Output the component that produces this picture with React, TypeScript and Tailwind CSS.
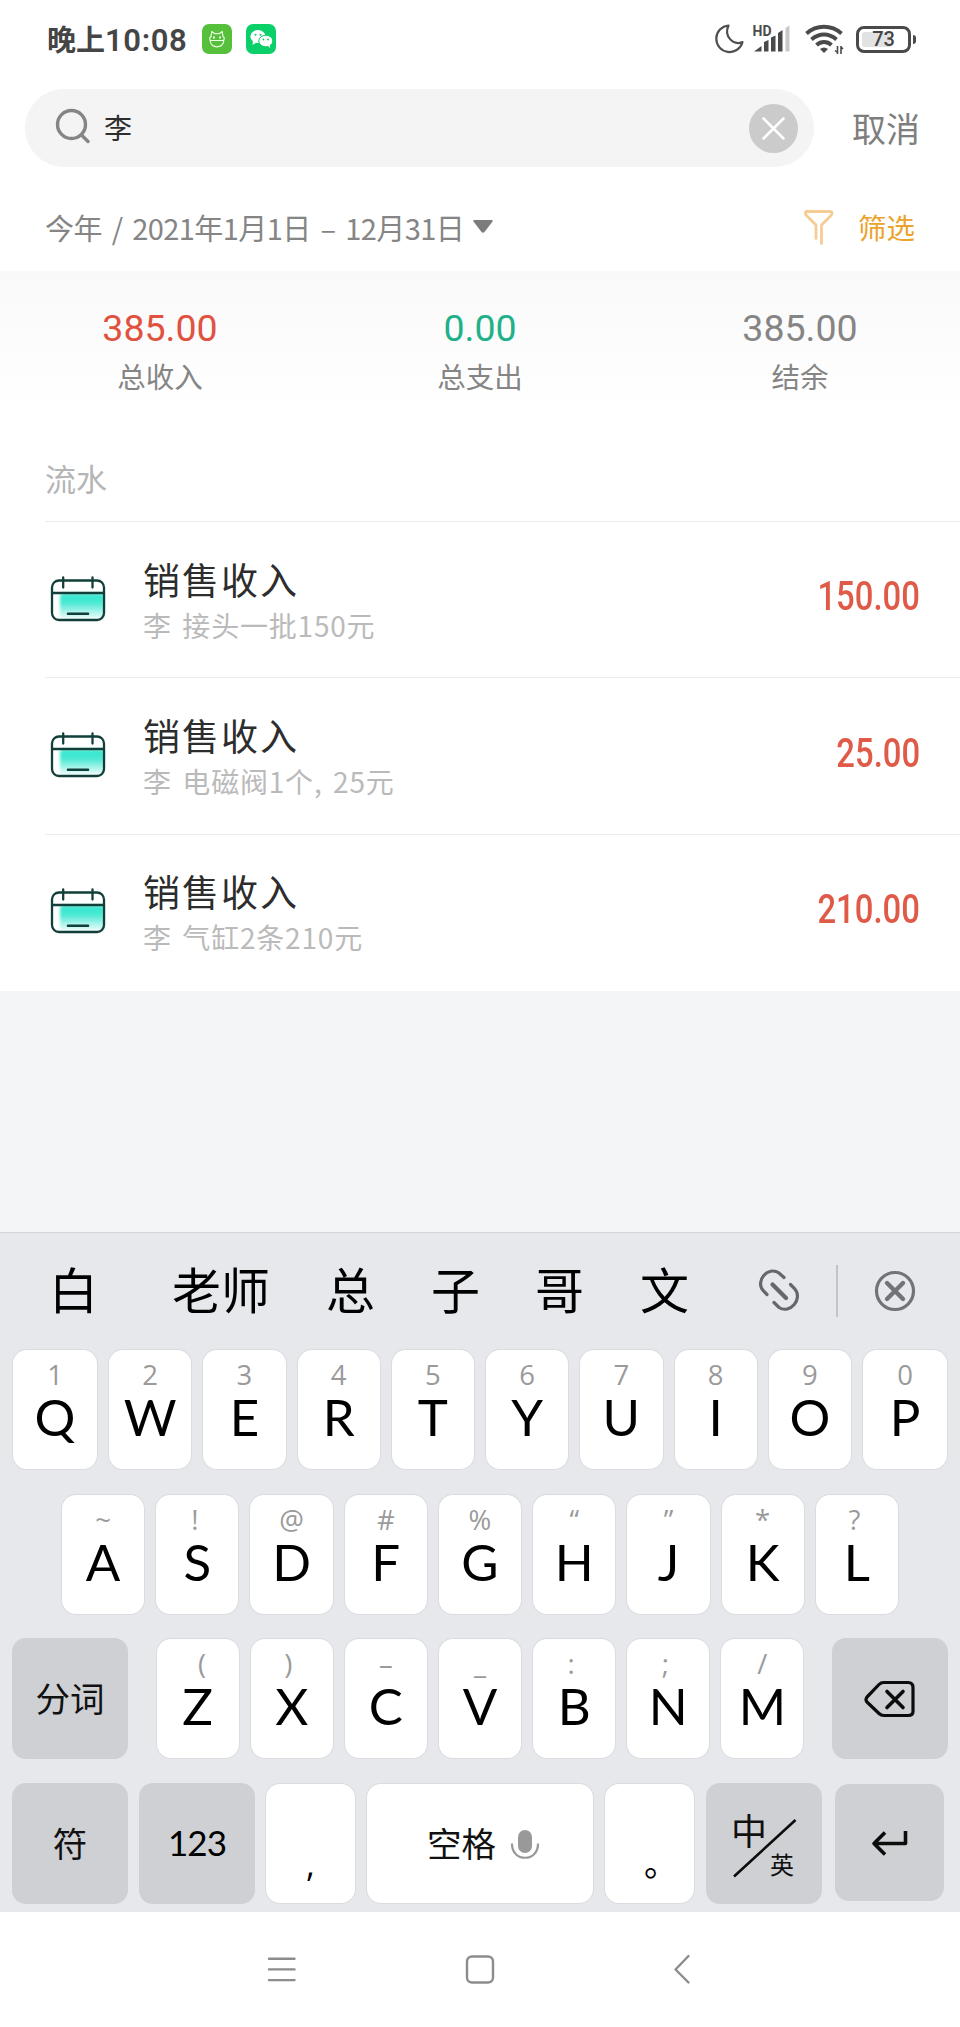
import type { ReactNode } from 'react'

const records = [
  { id: 1, title: '销售收入', note: '李 接头一批150元', amount: '150.00' },
  { id: 2, title: '销售收入', note: '李 电磁阀1个, 25元', amount: '25.00' },
  { id: 3, title: '销售收入', note: '李 气缸2条210元', amount: '210.00' },
]

const summary = [
  { label: '总收入', value: '385.00', color: 'text-[#e0523f]' },
  { label: '总支出', value: '0.00', color: 'text-[#1fb28a]' },
  { label: '结余', value: '385.00', color: 'text-[#858585]' },
]

const topRow = ['1Q', '2W', '3E', '4R', '5T', '6Y', '7U', '8I', '9O', '0P']
const middleRow = ['~A', '!S', '@D', '#F', '%G', '“H', '”J', '*K', '?L']
const bottomRow = ['(Z', ')X', '–C', '_V', ':B', ';N', '/M']

// hints whose glyph sits off the middle of the key
const hintShift: Record<string, string> = {
  '(': 'pl-[9px]',
  ')': 'pr-[7px]',
  '!': 'pr-[5px]',
  '?': 'pr-[5px]',
  ':': 'pr-[6px]',
  ';': 'pr-[6px]',
}

const StatusBar = () => (
  <header className="flex h-[78px] items-center pl-[47px] pr-[44px] text-[#454545]">
    <span className="w-[155px] whitespace-nowrap text-[29px] leading-[40px] font-bold">
      晚上<span className="font-['Roboto'] text-[31px] font-semibold tracking-[0.6px]">10:08</span>
    </span>
    <svg width="30" height="30" viewBox="0 0 30 30" fill="none">
      <rect width="30" height="30" rx="7" fill="#56bf3c" />
      <g stroke="#e9ffe0" strokeWidth="1.2" strokeLinecap="round" strokeLinejoin="round">
        <path d="M9 12.500 9.800 7.500l3 2.200h4.400l3-2.200.8 5c1.700 1 1.700 3.200 0 4.200" />
        <path d="M9 12.500c-1.700 1-1.700 3.200 0 4.200M8.200 16.500h13.600C22 25 8 25 8.200 16.500z" />
        <path d="M12 13.300v.4M18 13.300v.4" strokeWidth="2" />
      </g>
    </svg>
    <svg className="ml-[14px]" width="30" height="30" viewBox="0 0 30 30">
      <rect width="30" height="30" rx="7" fill="#0bcf68" />
      <ellipse cx="12" cy="12.500" rx="7.600" ry="6.500" fill="#fff" />
      <path d="M7 16.500 6.500 21l4-2.500z" fill="#fff" />
      <ellipse cx="19.800" cy="17" rx="7" ry="5.800" fill="#fff" stroke="#0bcf68" strokeWidth="1" />
      <path d="M21.500 21.500l2.700 2.500-.4-4z" fill="#fff" />
      <g fill="#0bcf68">
        <circle cx="9.500" cy="10.700" r="1" />
        <circle cx="14.500" cy="10.700" r="1" />
        <circle cx="17.400" cy="15.500" r=".9" />
        <circle cx="22" cy="15.500" r=".9" />
      </g>
    </svg>
    <div className="ml-auto flex items-center">
      <svg width="30" height="30" viewBox="0 0 30 30" fill="none" stroke="#4f4f4f" strokeWidth="2.200" strokeLinejoin="round">
        <path d="M14.500 1.500A13.300 13.300 0 1 0 28.500 18C19.500 22 9.500 12.500 14.500 1.500z" />
      </svg>
      <svg className="ml-[9px]" width="38" height="30" viewBox="0 0 38 30" fill="#4a4a4a">
        <text x="-.5" y="12" fontFamily="Roboto, sans-serif" fontSize="14" fontWeight="700">HD</text>
        <path d="M1 27.500 8.500 22v5.500zM11 27.500V18l4.500-2v11.500zM18 27.500V13.500l4.500-2v16zM25 27.500V9l4.500-3v21.500z" />
        <path d="M32.500 27.500V4l4-2.500v26z" fill="#c9c9c9" />
      </svg>
      <svg className="ml-[14px]" width="40" height="32" viewBox="0 0 40 32" fill="none" stroke="#4a4a4a" strokeWidth="3.800">
        <path d="M1.500 10.500C11.500 1.500 26.500 1.500 36.500 10.500M6.500 16.500c7.500-6.700 17.500-6.700 25 0M11.500 22c4.500-4 10.500-4 15 0" />
        <path d="M15 26q4-3 8 0l-4 4z" fill="#4a4a4a" stroke="none" />
        <path d="M32.500 23v8M30 27.500l2.500 2M36 31v-8M38 26l-2-2" strokeWidth="1.600" />
      </svg>
      <div className="ml-[11px] flex items-center gap-[2px]">
        <div className="flex h-[27px] w-[55px] rounded-[8px] border-[3px] border-[#4a4a4a] p-[3px]">
          <div className="flex h-full w-full items-center justify-center rounded-[3px] bg-linear-to-r from-[#e2e2e2] from-65% to-white to-65% font-['Roboto'] text-[20px] leading-none font-medium">
            73
          </div>
        </div>
        <div className="h-[9px] w-[3px] rounded-r-sm bg-[#4a4a4a]" />
      </div>
    </div>
  </header>
)

const SearchBar = () => (
  <div className="mt-[11px] flex h-[78px] items-center pl-[25px]">
    <div className="flex h-full w-[789px] items-center rounded-full bg-[#f4f4f4] pr-[16px] pl-[30px]">
      <svg className="mb-[4px]" width="36" height="36" viewBox="0 0 36 36" fill="none" stroke="#858585" strokeWidth="3.400" strokeLinecap="round">
        <circle cx="16.500" cy="16.500" r="14" />
        <path d="M26.500 27 33 33.500" />
      </svg>
      <span className="mb-[3px] ml-[13px] text-[28px] leading-[40px] text-[#2d2d2d]">李</span>
      <svg className="ml-auto" width="49" height="49" viewBox="0 0 49 49" fill="none">
        <circle cx="24.500" cy="24.500" r="24.500" fill="#cbcbcb" />
        <path d="m14.500 14.500 20 20m0-20-20 20" stroke="#fff" strokeWidth="2.500" strokeLinecap="round" />
      </svg>
    </div>
    <span className="ml-[38px] text-[34px] leading-[44px] text-[#7e7e7e]">取消</span>
  </div>
)

const FilterBar = () => (
  <div className="flex h-[104px] items-center pt-[15px] pr-[45px] pl-[45px] text-[29px] leading-[40px] text-[#858585]">
    <span className="w-[416px] whitespace-nowrap tracking-[-0.600px] [word-spacing:4px]">今年 / 2021年1月1日 – 12月31日</span>
    <svg className="ml-[12px]" width="20" height="13" viewBox="0 0 20 13" fill="#7c7c7c">
      <path d="M1.500 0h17q2 0 1 1.500L11.500 12q-1.500 1.500-3 0L.5 1.500q-1-1.500 1-1.500z" />
    </svg>
    <svg className="ml-auto" width="30" height="38" viewBox="0 0 30 38" fill="none" stroke="#f5cc94" strokeWidth="2.800" strokeLinecap="round" strokeLinejoin="round">
      <path d="M12 30.500V17L2.500 7.500Q0 3.500 3 3.500h23q3.500 0 1 4L17.500 17v18.500" />
    </svg>
    <span className="ml-[24px] text-[28.500px] text-[#eba32d]">筛选</span>
  </div>
)

const CalendarIcon = ({ id }: { id: number }) => (
  <svg width="58" height="50" viewBox="0 0 58 50" fill="none">
    <defs>
      <linearGradient id={`fill${id}`} x1="0" y1="0" x2="0" y2="1">
        <stop offset="0" stopColor="#35e6cd" />
        <stop offset=".35" stopColor="#45e8d2" />
        <stop offset="1" stopColor="#45e8d2" stopOpacity=".1" />
      </linearGradient>
      <filter id={`soft${id}`} x="-20%" y="-20%" width="140%" height="140%">
        <feGaussianBlur stdDeviation="1.800" />
      </filter>
    </defs>
    <rect x="11" y="18.500" width="44" height="25" rx="3" fill={`url(#fill${id})`} filter={`url(#soft${id})`} />
    <g stroke="#123f3a" strokeWidth="2.300" strokeLinecap="round">
      <rect x="3" y="5.500" width="52" height="39.500" rx="7" />
      <path d="M3 18h52M14.200 2.500v10M43.500 2.500v10" />
      <path d="M19 38.700h20" strokeWidth="2.600" />
    </g>
  </svg>
)

const KeyCap = ({ keyText, className = 'flex-1' }: { keyText: string; className?: string }) => (
  <div className={`flex h-[119px] flex-col items-center rounded-[14px] bg-white pt-[9px] shadow-[0_0_0_1px_#dadbdf] ${className}`}>
    <span className={`font-['Open_Sans'] text-[27.500px] leading-[31px] text-[#9a9a9a] ${hintShift[keyText[0]] ?? ''}`}>{keyText[0]}</span>
    <span className="font-['Lato'] text-[51px] leading-[54px] text-black">{keyText[1]}</span>
  </div>
)

const GreyKey = ({ children, className = 'h-[121px] w-[116px]' }: { children: ReactNode; className?: string }) => (
  <div className={`flex shrink-0 items-center justify-center rounded-[14px] bg-[#cfd0d4] text-[34.500px] leading-[44px] text-[#111] ${className}`}>
    {children}
  </div>
)

const Candidates = () => (
  <div className="flex h-[116px] items-center text-[49px] leading-[60px] text-black">
    <div className="flex h-full items-center pb-[7px]">
      <span className="ml-[49px]">白</span>
      <span className="ml-[74px]">老师</span>
      <span className="ml-[56px]">总</span>
      <span className="ml-[56px]">子</span>
      <span className="ml-[55px]">哥</span>
      <span className="ml-[56px]">文</span>
    </div>
    <svg className="ml-[68px]" width="44" height="44" viewBox="0 0 44 44" fill="none" stroke="#66676a" strokeWidth="3.200" strokeLinecap="round">
      <path d="M10 25.500 6.500 22C-2.500 12 11-3.500 22 4l5 4.500M33.500 15.500l4 4C46.500 30 33 45.500 22 38.500l-5-5" />
      <path d="M15.500 15.500 29 29" strokeWidth="4.200" />
    </svg>
    <div className="ml-[35px] h-[52px] w-[2px] bg-[#c2c4c8]" />
    <svg className="ml-[36px]" width="42" height="42" viewBox="0 0 42 42" fill="none" stroke="#727376" strokeLinecap="round">
      <circle cx="21" cy="21" r="18.500" strokeWidth="3.200" />
      <path d="m13 13 16 16m0-16L13 29" strokeWidth="4.400" />
    </svg>
  </div>
)

const Keyboard = () => (
  <section className="h-[680px] border-t border-[#d2d4d8] bg-[#e6e8ec]">
    <Candidates />
    <div className="mt-[1px] mr-[13px] ml-[13px] flex gap-[12px]">
      {topRow.map((k, i) => (
        <KeyCap key={k} keyText={k} className={i === 0 || i === 9 ? 'w-[84px]' : 'flex-1'} />
      ))}
    </div>
    <div className="mx-[62px] mt-[26px] flex gap-[12px]">
      {middleRow.map((k) => (
        <KeyCap key={k} keyText={k} />
      ))}
    </div>
    <div className="mx-[12px] mt-[24px] flex items-center">
      <GreyKey>
        <span className="mb-[3px]">分词</span>
      </GreyKey>
      <div className="mx-[28.500px] flex flex-1 gap-[12px]">
        {bottomRow.map((k) => (
          <KeyCap key={k} keyText={k} />
        ))}
      </div>
      <GreyKey>
        <svg width="52" height="40" viewBox="0 0 52 40" fill="none" stroke="#0c0c0c" strokeWidth="3.200" strokeLinecap="round" strokeLinejoin="round">
          <path d="M19.500 3.500H44q5 0 5 5v24q0 4-5 4H20q-3 0-5-2L3.500 23.500q-3-3 0-6L15 5.500q2-2 4.500-2z" />
          <path d="m23 12.500 16 16m0-16L23 28.500" strokeWidth="3.600" />
        </svg>
      </GreyKey>
    </div>
    <div className="mx-[12px] mt-[24px] flex items-start">
      <GreyKey>
        <span className="mb-[3px]">符</span>
      </GreyKey>
      <GreyKey className="ml-[11px] h-[121px] w-[116px]">
        <span className="mb-[3px] font-['Lato'] text-[35px] font-normal tracking-[-1px] text-black">123</span>
      </GreyKey>
      <div className="mt-[1px] ml-[11px] flex h-[119px] w-[89px] items-end justify-center rounded-[14px] bg-white pb-[22px] shadow-[0_0_0_1px_#dadbdf]">
        <span className="font-['Open_Sans'] text-[34px] leading-[34px]">,</span>
      </div>
      <div className="mt-[1px] ml-[12px] flex h-[119px] w-[226px] items-center rounded-[14px] bg-white pl-[60px] text-[34.500px] leading-[44px] text-[#111] shadow-[0_0_0_1px_#dadbdf]">
        <span className="mb-[3px]">空格</span>
        <svg className="ml-[13px]" width="32" height="34" viewBox="0 0 32 34" fill="none">
          <rect x="9" y="3" width="14" height="23" rx="7" fill="#999" />
          <path d="M3 16.500c-.5 19 26.500 19 26 0" stroke="#999" strokeWidth="2.200" />
        </svg>
      </div>
      <div className="mt-[1px] ml-[12px] flex h-[119px] w-[89px] items-end justify-center rounded-[14px] bg-white pb-[24px] shadow-[0_0_0_1px_#dadbdf]">
        <span className="pl-[23px] text-[34px] leading-[34px]">。</span>
      </div>
      <GreyKey className="relative ml-[12px] h-[121px] w-[116px]">
        <div className="flex flex-col">
          <span className="-ml-[3px] text-[36px] leading-[44px]">中</span>
          <span className="-mt-[3px] ml-[36px] text-[24px] leading-[32px]">英</span>
        </div>
        <svg className="absolute inset-0" width="116" height="121" viewBox="0 0 116 121" stroke="#0c0c0c" strokeWidth="2.600">
          <path d="M28 93.500 89.500 37" />
        </svg>
      </GreyKey>
      <GreyKey className="mt-[1px] ml-[13px] h-[117px] w-[109px]">
        <svg width="38" height="28" viewBox="0 0 38 28" fill="none" stroke="#0c0c0c" strokeWidth="3.600" strokeLinejoin="round">
          <path d="M34.500 2v12.500H4M14 3.500l-11 11L14 25.500" />
        </svg>
      </GreyKey>
    </div>
  </section>
)

const NavBar = () => (
  <nav className="flex h-[115px] items-center justify-center bg-white">
    <svg width="960" height="34" viewBox="0 0 960 34" fill="none" stroke="#8c8c8c" strokeWidth="2.400" strokeLinecap="round" strokeLinejoin="round">
      <path d="M269 5.700h25.500M269 16.400h25.500M269 27.100h25.500" />
      <rect x="467" y="3.500" width="26" height="26" rx="5" />
      <path d="M688.500 3 675.500 16.500l13 13" />
    </svg>
  </nav>
)

export default function App() {
  return (
    <div className="flex h-[2027px] w-[960px] flex-col overflow-hidden bg-[#f4f5f7] font-['Noto_Sans_CJK_SC',sans-serif]">
      <div className="h-[991px] bg-white">
        <StatusBar />
        <SearchBar />
        <FilterBar />
        <div className="grid h-[140px] grid-cols-3 bg-linear-to-b from-[#f9f9f9] to-white pt-[37px] text-center">
          {summary.map((s) => (
            <div key={s.label}>
              <p className={`font-['Roboto'] text-[37.500px] leading-[40px] ${s.color}`}>{s.value}</p>
              <p className="mt-[8px] text-[28.500px] leading-[40px] text-[#858585]">{s.label}</p>
            </div>
          ))}
        </div>
        <h2 className="ml-[45px] flex h-[110px] items-center pt-[24px] text-[31px] leading-[40px] text-[#b5b5b5]">流水</h2>
        <ul className="ml-[45px]">
          {records.map((r) => (
            <li key={r.id} className="flex h-[156.400px] items-center border-t-[1.500px] border-[#ebebed] pr-[40px]">
              <div className="ml-[4px] w-[94px]">
                <CalendarIcon id={r.id} />
              </div>
              <div className="flex flex-col">
                <span className="text-[37px] leading-[50px] tracking-[2px] text-[#2d2d2d]">{r.title}</span>
                <span className="text-[28px] leading-[42px] tracking-[0.800px] text-[#bababa] [word-spacing:3.500px]">{r.note}</span>
              </div>
              <span className="mb-[5px] ml-auto origin-right scale-x-[0.82] font-['Roboto'] text-[40px] leading-[50px] font-medium text-[#e05a48]">
                {r.amount}
              </span>
            </li>
          ))}
        </ul>
      </div>
      <div className="flex-1" />
      <Keyboard />
      <NavBar />
    </div>
  )
}
